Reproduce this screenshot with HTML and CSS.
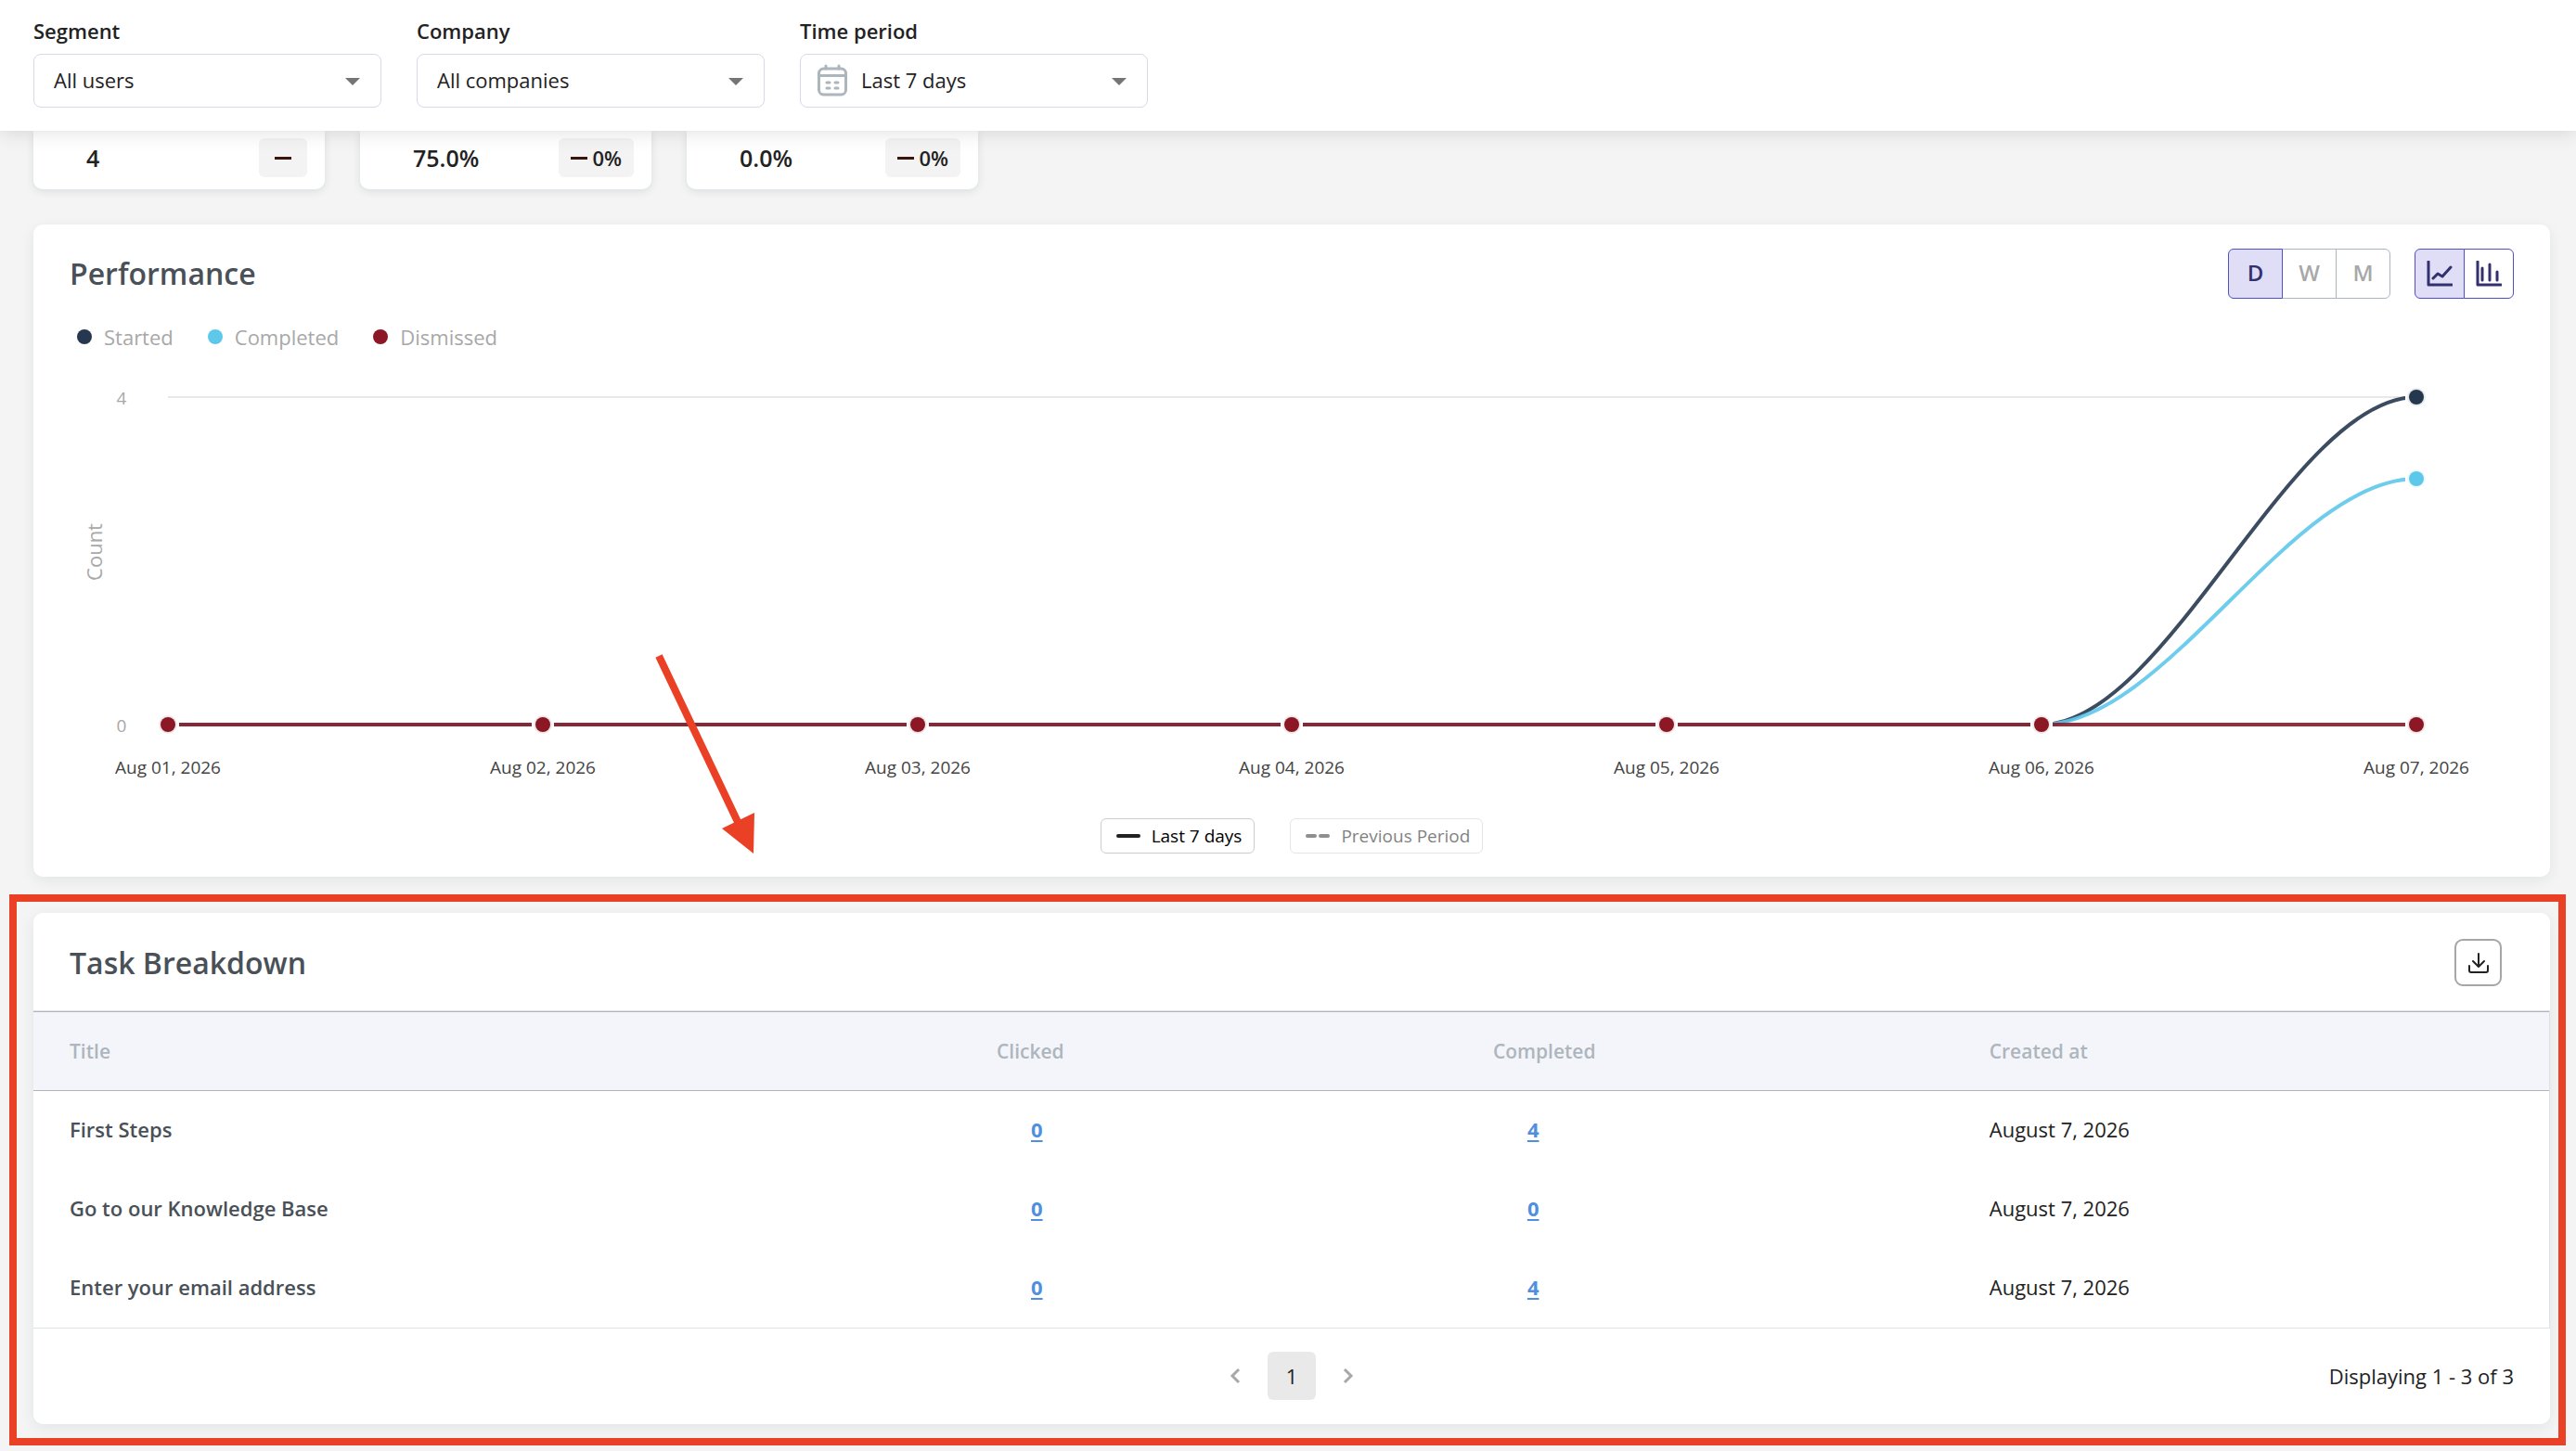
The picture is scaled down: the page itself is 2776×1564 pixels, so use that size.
FILE: index.html
```html
<!DOCTYPE html>
<html lang="en">

<head>
    <meta charset="UTF-8">
    <meta name="viewport" content="width=device-width, initial-scale=1.0">
    <title>Task performance</title>
    <link rel="stylesheet" href="styles.css">
</head>

<body>
    <header class="filters">
        <div class="filter">
            <label for="segment">Segment</label>
            <div class="select">
                <select id="segment">
                    <option>All users</option>
                </select>
                <svg class="select__arrow" viewBox="0 0 16 8"><path d="M0 0h16l-8 8z" /></svg>
            </div>
        </div>
        <div class="filter">
            <label for="company">Company</label>
            <div class="select">
                <select id="company">
                    <option>All companies</option>
                </select>
                <svg class="select__arrow" viewBox="0 0 16 8"><path d="M0 0h16l-8 8z" /></svg>
            </div>
        </div>
        <div class="filter">
            <label for="period">Time period</label>
            <div class="select select--icon">
                <svg class="select__icon" viewBox="0 0 34 36" fill="none" stroke="#adb5bd" stroke-width="3" stroke-linecap="round">
                    <rect x="2.500" y="5" width="29" height="28" rx="5" />
                    <path d="M3 12.500h28M10 2v3M24 2v3" />
                    <path d="M11 20h3M20 20h3M11 26h3M20 26h3" />
                </svg>
                <select id="period">
                    <option>Last 7 days</option>
                </select>
                <svg class="select__arrow" viewBox="0 0 16 8"><path d="M0 0h16l-8 8z" /></svg>
            </div>
        </div>
    </header>

    <main>
        <section class="stats">
            <div class="stat">
                <span class="stat__value">4</span>
                <span class="stat__change stat__change--empty"><i class="dash"></i></span>
            </div>
            <div class="stat">
                <span class="stat__value">75.0%</span>
                <span class="stat__change"><i class="dash"></i>0%</span>
            </div>
            <div class="stat">
                <span class="stat__value">0.0%</span>
                <span class="stat__change"><i class="dash"></i>0%</span>
            </div>
        </section>

        <section class="card performance">
            <div class="performance__header">
                <h2>Performance</h2>
                <div class="toggles">
                    <div class="toggle">
                        <button type="button" class="active">D</button>
                        <button type="button">W</button>
                        <button type="button">M</button>
                    </div>
                    <div class="toggle toggle--chart">
                        <button type="button" class="active" aria-label="Line chart">
                            <svg viewBox="0 0 28 28"><path d="M2 1v25h25M7 19l5-5 5 3 9-10" /></svg>
                        </button>
                        <button type="button" aria-label="Bar chart">
                            <svg viewBox="0 0 28 28"><path d="M2 1v25h25M7 8v13M15 4v17M23 12v9" /></svg>
                        </button>
                    </div>
                </div>
            </div>

            <ul class="legend">
                <li class="legend__item legend__item--started">Started</li>
                <li class="legend__item legend__item--completed">Completed</li>
                <li class="legend__item legend__item--dismissed">Dismissed</li>
            </ul>

            <svg class="chart" viewBox="0 0 2712 440">
                <path class="chart__grid" d="M145 28H2567" />

                <g class="chart__lines">
                    <path class="line--started" d="M145 381H2164C2299 381 2433 28 2568 28" />
                    <path class="line--completed" d="M145 381H2164C2299 381 2433 116 2568 116" />
                    <path class="line--dismissed" d="M145 381H2568" />
                </g>

                <!-- white gap where each line meets its point -->
                <g class="chart__gaps">
                    <rect x="133" y="369" width="24" height="24" />
                    <rect x="537" y="369" width="24" height="24" />
                    <rect x="941" y="369" width="24" height="24" />
                    <rect x="1344" y="369" width="24" height="24" />
                    <rect x="1748" y="369" width="24" height="24" />
                    <rect x="2152" y="369" width="24" height="24" />
                    <rect x="2556" y="369" width="24" height="24" />
                    <rect x="2556" y="104" width="24" height="24" />
                    <rect x="2556" y="16" width="24" height="24" />
                </g>

                <g class="chart__points">
                    <circle class="point--dismissed" cx="145" cy="381" r="8" />
                    <circle class="point--dismissed" cx="549" cy="381" r="8" />
                    <circle class="point--dismissed" cx="953" cy="381" r="8" />
                    <circle class="point--dismissed" cx="1356" cy="381" r="8" />
                    <circle class="point--dismissed" cx="1760" cy="381" r="8" />
                    <circle class="point--dismissed" cx="2164" cy="381" r="8" />
                    <circle class="point--dismissed" cx="2568" cy="381" r="8" />
                    <circle class="point--completed" cx="2568" cy="116" r="8" />
                    <circle class="point--started" cx="2568" cy="28" r="8" />
                </g>

                <g class="chart__values">
                    <text x="95" y="36">4</text>
                    <text x="95" y="389">0</text>
                </g>
                <text class="chart__title" transform="translate(74 195) rotate(-90)">Count</text>
                <g class="chart__dates">
                    <text x="145" y="434">Aug 01, 2026</text>
                    <text x="549" y="434">Aug 02, 2026</text>
                    <text x="953" y="434">Aug 03, 2026</text>
                    <text x="1356" y="434">Aug 04, 2026</text>
                    <text x="1760" y="434">Aug 05, 2026</text>
                    <text x="2164" y="434">Aug 06, 2026</text>
                    <text x="2568" y="434">Aug 07, 2026</text>
                </g>

                <g class="arrow">
                    <path class="arrow__line" d="M674 307L760 488" />
                    <path class="arrow__head" d="M742 493L777 476L776 520z" />
                </g>
            </svg>

            <div class="periods">
                <button type="button" class="period">
                    <svg viewBox="0 0 26 4"><path d="M2 2h22" /></svg>
                    Last 7 days
                </button>
                <button type="button" class="period period--off">
                    <svg viewBox="0 0 26 4"><path d="M2 2h8M16 2h8" /></svg>
                    Previous Period
                </button>
            </div>
        </section>

        <section class="card breakdown">
            <div class="breakdown__header">
                <h2>Task Breakdown</h2>
                <button type="button" class="download" aria-label="Download">
                    <svg viewBox="0 0 24 24"><path d="M12 2v13M6 10l6 6 6-6M2 15v5q0 2 2 2h16q2 0 2-2v-5" /></svg>
                </button>
            </div>
            <table>
                <thead>
                    <tr>
                        <th class="col-title">Title</th>
                        <th class="col-count">Clicked</th>
                        <th class="col-count">Completed</th>
                        <th>Created at</th>
                    </tr>
                </thead>
                <tbody>
                    <tr>
                        <td class="task">First Steps</td>
                        <td class="count"><a href="#">0</a></td>
                        <td class="count"><a href="#">4</a></td>
                        <td>August 7, 2026</td>
                    </tr>
                    <tr>
                        <td class="task">Go to our Knowledge Base</td>
                        <td class="count"><a href="#">0</a></td>
                        <td class="count"><a href="#">0</a></td>
                        <td>August 7, 2026</td>
                    </tr>
                    <tr>
                        <td class="task">Enter your email address</td>
                        <td class="count"><a href="#">0</a></td>
                        <td class="count"><a href="#">4</a></td>
                        <td>August 7, 2026</td>
                    </tr>
                </tbody>
            </table>
            <div class="breakdown__footer">
                <nav class="pagination">
                    <button type="button" aria-label="Previous page">
                        <svg viewBox="0 0 12 18"><path d="M10 2L3 9l7 7" /></svg>
                    </button>
                    <button type="button" class="active">1</button>
                    <button type="button" aria-label="Next page">
                        <svg viewBox="0 0 12 18"><path d="M2 2l7 7-7 7" /></svg>
                    </button>
                </nav>
                <span class="displaying">Displaying 1 - 3 of 3</span>
            </div>
            <div class="highlight"></div>
        </section>
    </main>
</body>

</html>
```
FILE: styles.css
```css
:root {
    --background: #f4f4f4;
    --text: #222222;
    --heading: #495057;
    --muted: #a8a8a8;
    --gray: #adb5bd;
    --field-border: #d8d8e8;
    --purple: #5050c0;
    --purple-dark: #32306e;
    --purple-light: #dfdef6;
    --started: #263850;
    --completed: #5ec8ea;
    --dismissed: #8b1824;
    --link: #4f8fe0;
    --highlight: #ea4025;
}

* {
    box-sizing: border-box;
}

body {
    margin: 0;
    font-family: 'Open Sans', sans-serif;
    font-size: 22px;
    line-height: 30px;
    color: var(--text);
    background-color: var(--background);
}

button,
select {
    font: inherit;
    color: inherit;
    background: none;
    border: none;
    padding: 0;
    cursor: pointer;
}

svg {
    display: block;
}

h2 {
    margin: 0;
    font-size: 32px;
    line-height: 44px;
    font-weight: 600;
    color: var(--heading);
}

/* filters */

.filters {
    position: relative;
    z-index: 1;
    display: flex;
    gap: 38px;
    padding: 18px 36px 25px;
    background-color: #fff;
    box-shadow: 0 2px 20px rgba(0, 0, 0, 0.12);
}

.filter {
    flex: 0 1 375px;
}

.filter label {
    display: block;
    margin-bottom: 10px;
    font-weight: 600;
}

.select {
    position: relative;
}

.select select {
    width: 100%;
    height: 58px;
    padding: 0 56px 2px 21px;
    border: 1px solid var(--field-border);
    border-radius: 8px;
    appearance: none;
}

.select--icon select {
    padding-left: 65px;
}

.select__arrow {
    position: absolute;
    top: 26px;
    right: 23px;
    width: 16px;
    fill: #757575;
    pointer-events: none;
}

.select__icon {
    position: absolute;
    top: 11px;
    left: 18px;
    width: 34px;
    pointer-events: none;
}

main {
    padding: 0 28px 30px 36px;
}

/* stats */

.stats {
    display: flex;
    gap: 38px;
    margin-bottom: 38px;
}

.stat {
    flex: 0 1 314px;
    display: flex;
    justify-content: space-between;
    align-items: center;
    padding: 8px 19px 13px 57px;
    border-radius: 0 0 10px 10px;
    background-color: #fff;
    box-shadow: 0 2px 8px rgba(30, 50, 70, 0.12);
}

.stat__value {
    font-size: 25px;
    font-weight: 600;
}

.stat__change {
    display: flex;
    align-items: center;
    gap: 5px;
    height: 42px;
    padding: 0 13px;
    border-radius: 6px;
    background-color: #f3f3f3;
    font-weight: 600;
}

.stat__change--empty {
    padding: 0 17px;
}

.dash {
    width: 18px;
    height: 3px;
    background-color: #3a1410;
}

.card {
    border-radius: 10px;
    background-color: #fff;
    box-shadow: 0 4px 14px rgba(30, 50, 70, 0.08);
}

/* performance */

.performance {
    margin-bottom: 39px;
    padding: 26px 0 25px;
}

.performance__header {
    display: flex;
    justify-content: space-between;
    align-items: center;
    padding: 0 39px;
}

.toggles {
    display: flex;
    gap: 26px;
}

.toggle {
    display: flex;
}

.toggle button {
    width: 59px;
    height: 54px;
    padding-bottom: 2px;
    border: 1px solid var(--gray);
    font-size: 24px;
    font-weight: 600;
    color: var(--muted);
}

.toggle button + button {
    margin-left: -1px;
}

.toggle button:first-child {
    border-radius: 6px 0 0 6px;
}

.toggle button:last-child {
    border-radius: 0 6px 6px 0;
}

.toggle button.active {
    position: relative;
    border-color: var(--purple);
    background-color: var(--purple-light);
    color: var(--purple-dark);
}

.toggle--chart button {
    display: flex;
    justify-content: center;
    align-items: center;
    width: 54px;
    padding: 0;
    border-color: var(--purple);
}

.toggle svg {
    width: 28px;
    fill: none;
    stroke: var(--purple-dark);
    stroke-width: 3;
    stroke-linecap: round;
    stroke-linejoin: round;
}

.legend {
    display: flex;
    gap: 37px;
    margin: 26px 0 22px;
    padding: 0 47px;
    list-style-type: none;
}

.legend__item {
    display: flex;
    align-items: center;
    gap: 13px;
    color: var(--muted);
}

.legend__item::before {
    content: '';
    width: 16px;
    height: 16px;
    border-radius: 50%;
}

.legend__item--started::before {
    background-color: var(--started);
}

.legend__item--completed::before {
    background-color: var(--completed);
}

.legend__item--dismissed::before {
    background-color: var(--dismissed);
}

.chart {
    width: 100%;
    overflow: visible;
    font-size: 19px;
    text-anchor: middle;
}

.chart__grid {
    stroke: #e8e8e8;
    stroke-width: 2;
}

.chart__lines {
    fill: none;
    stroke-width: 4;
    stroke-opacity: 0.9;
}

.chart__gaps {
    fill: #fff;
}

.chart__points {
    stroke-width: 4;
    stroke-opacity: 0.1;
}

.line--started,
.point--started {
    stroke: var(--started);
}

.line--completed,
.point--completed {
    stroke: var(--completed);
}

.line--dismissed,
.point--dismissed {
    stroke: var(--dismissed);
}

.point--started {
    fill: var(--started);
}

.point--completed {
    fill: var(--completed);
}

.point--dismissed {
    fill: var(--dismissed);
}

.chart__values,
.chart__title {
    fill: var(--muted);
}

.chart__title {
    font-size: 22px;
}

.chart__dates {
    fill: #444444;
}

.arrow__line {
    stroke: var(--highlight);
    stroke-width: 8;
}

.arrow__head {
    fill: var(--highlight);
}

.periods {
    display: flex;
    justify-content: center;
    gap: 38px;
    margin-top: 42px;
}

.period {
    display: flex;
    align-items: center;
    gap: 12px;
    height: 38px;
    padding: 0 13px 0 16px;
    border: 1px solid #cccccc;
    border-radius: 6px;
    font-size: 19px;
    color: #000;
}

.period svg {
    width: 26px;
    stroke: #222222;
    stroke-width: 4;
    stroke-linecap: round;
}

.period--off {
    opacity: 0.5;
}

/* task breakdown */

.breakdown {
    position: relative;
}

.breakdown__header {
    display: flex;
    justify-content: space-between;
    align-items: center;
    padding: 28px 52px 26px 39px;
}

.download {
    display: flex;
    justify-content: center;
    align-items: center;
    width: 51px;
    height: 51px;
    border: 2px solid #a6a6a6;
    border-radius: 9px;
}

.download svg {
    width: 24px;
    fill: none;
    stroke: #222222;
    stroke-width: 2;
    stroke-linecap: round;
    stroke-linejoin: round;
}

table {
    width: 100%;
    table-layout: fixed;
    border-spacing: 0;
    border: 1px solid #dee2e6;
    border-left: none;
}

th,
td {
    padding: 0 39px;
    text-align: left;
}

th {
    height: 86px;
    border-top: 1px solid var(--gray);
    border-bottom: 1px solid var(--gray);
    background-color: #f4f5fa;
    font-size: 21px;
    font-weight: 600;
    color: var(--gray);
}

td {
    height: 85px;
    padding-bottom: 3px;
}

.col-title {
    width: 36.85%;
}

.col-count {
    width: 19.73%;
}

.task {
    font-weight: 600;
    color: var(--heading);
}

.count {
    padding-left: 76px;
}

.count a {
    font-weight: 700;
    color: var(--link);
    text-decoration-thickness: 2px;
    text-underline-offset: 3px;
}

.breakdown__footer {
    display: grid;
    grid-template-columns: 1fr auto 1fr;
    align-items: center;
    padding: 25px 39px 26px;
}

.pagination {
    grid-column: 2;
    display: flex;
    gap: 9px;
}

.pagination button {
    display: flex;
    justify-content: center;
    align-items: center;
    width: 52px;
    height: 52px;
    border-radius: 6px;
}

.pagination button.active {
    background-color: #e9e9e9;
}

.pagination svg {
    width: 12px;
    fill: none;
    stroke: var(--muted);
    stroke-width: 3;
}

.displaying {
    text-align: right;
}

.highlight {
    position: absolute;
    inset: -20px -17px -23px -26px;
    border: 8px solid var(--highlight);
    pointer-events: none;
}
```
